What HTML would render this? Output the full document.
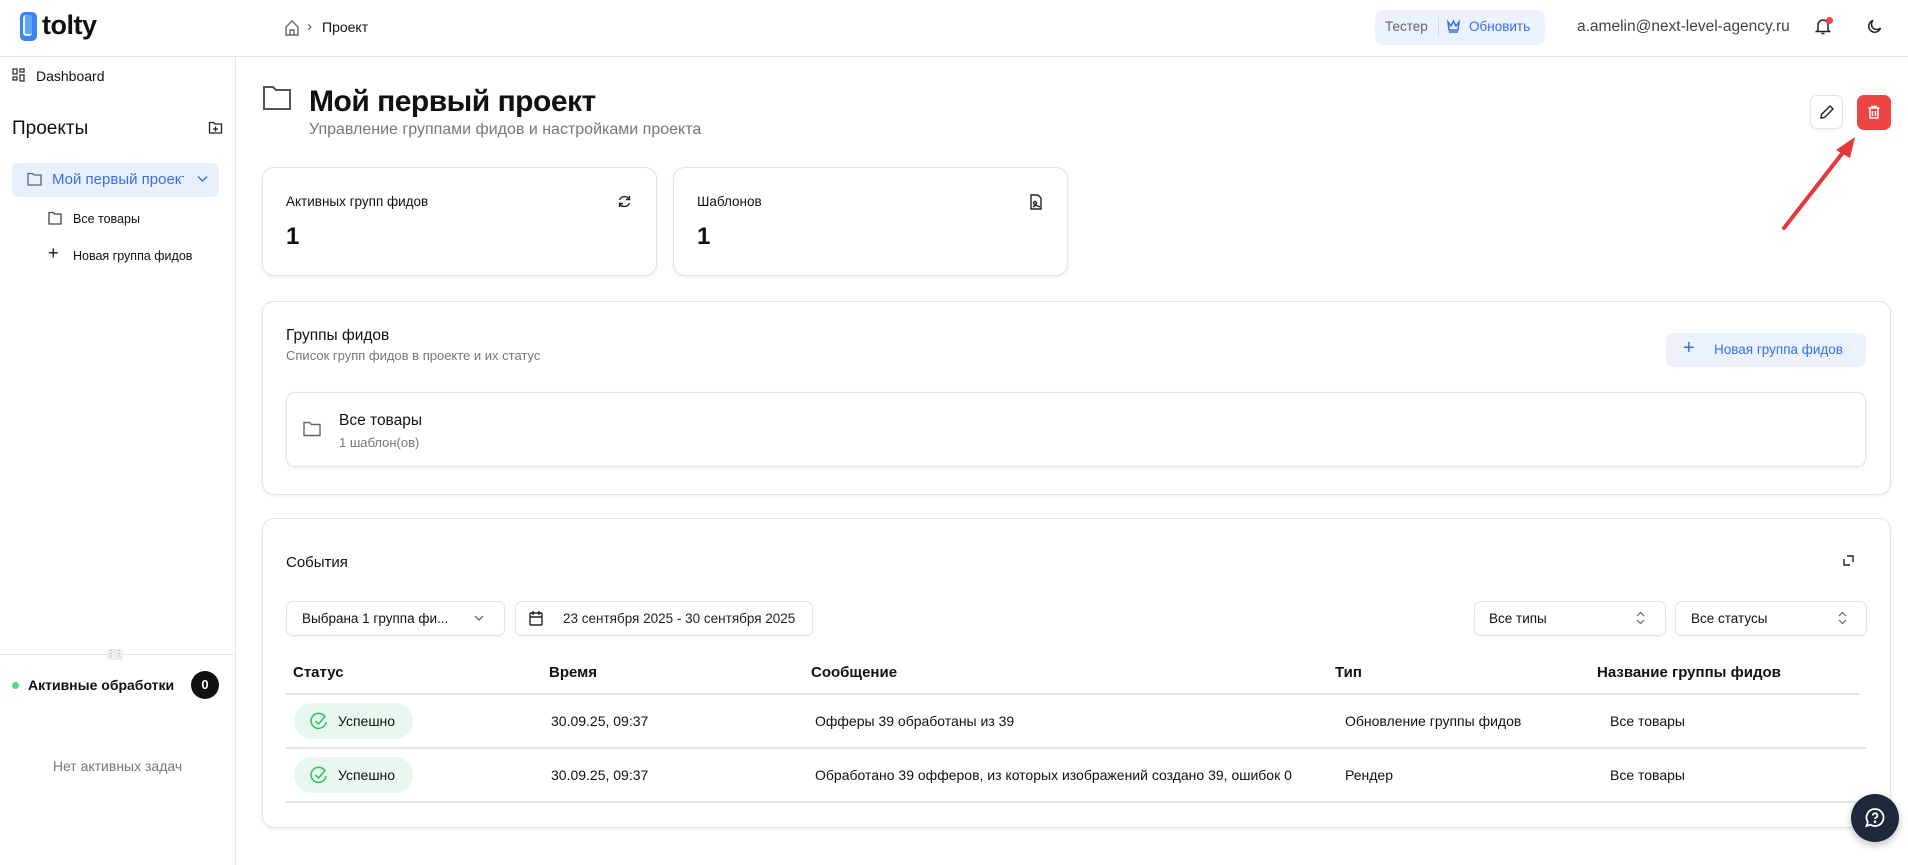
<!DOCTYPE html>
<html><head><meta charset="utf-8"><style>
*{box-sizing:border-box;margin:0;padding:0}
body{width:1908px;height:865px;overflow:hidden;background:#fff;font-family:"Liberation Sans","Noto Sans CJK SC",sans-serif;color:#111;font-size:14px;position:relative}
.a{position:absolute}
.card{position:absolute;border:1px solid #e4e4e7;border-radius:12px;background:#fff;box-shadow:0 1px 3px rgba(0,0,0,.08)}
.btn{position:absolute;border:1px solid #e4e4e7;border-radius:7px;background:#fff;box-shadow:0 1px 2px rgba(0,0,0,.05)}
svg{display:block}
.hl{position:absolute;height:2px;background:#e5e5e5}
</style></head><body>
<!-- header -->
<div class="a" style="left:0;top:56px;width:1908px;height:1px;background:#e5e5e5"></div>
<div class="a" style="left:20px;top:12px;width:17px;height:29px;border-radius:5px;background:#3b82f6"></div>
<div class="a" style="left:23px;top:15px;width:9px;height:21px;border-radius:3px;background:#fff;opacity:.9"></div>
<div class="a" style="left:25px;top:15px;width:7px;height:19px;border-radius:2px;background:#60a5fa"></div>
<div class="a" style="left:42px;top:10px;font-size:27px;font-weight:bold;letter-spacing:-0.5px;color:#111">tolty</div>
<svg class="a" style="left:284px;top:19px" width="16" height="18" viewBox="0 0 16 18" fill="none" stroke="#666" stroke-width="1.4"><path d="M2 8 8 2l6 6v8H2z"/><path d="M6 16v-5h4v5"/></svg>
<div class="a" style="left:307px;top:18px;color:#555;font-size:15px">›</div>
<div class="a" style="left:322px;top:19px;font-size:14px">Проект</div>
<div class="a" style="left:1375px;top:10px;width:170px;height:35px;border-radius:8px;background:#ebf1fd"></div>
<div class="a" style="left:1385px;top:19px;color:#666;font-size:13.5px">Тестер</div>
<div class="a" style="left:1438px;top:17px;width:1px;height:20px;background:#d4d9e4"></div>
<svg class="a" style="left:1446px;top:19px" width="15" height="15" viewBox="0 0 15 15" fill="none" stroke="#3b6fe0" stroke-width="1.5"><path d="M2 3l3 4 2.5-5L10 7l3-4-1 8H3z"/><path d="M3 13h9"/></svg>
<div class="a" style="left:1469px;top:19px;color:#3b6fe0;font-size:13.5px">Обновить</div>
<div class="a" style="left:1577px;top:18px;color:#444;font-size:15.5px">a.amelin@next-level-agency.ru</div>
<svg class="a" style="left:1815px;top:17px" width="16" height="18" viewBox="0 0 16 18" fill="none" stroke="#222" stroke-width="1.5"><path d="M3 13V8a5 5 0 0 1 10 0v5l1.5 1.5h-13z"/><path d="M6.5 16.5h3"/></svg>
<div class="a" style="left:1826px;top:17px;width:7px;height:7px;border-radius:50%;background:#ef4444"></div>
<svg class="a" style="left:1867px;top:18px" width="16" height="16" viewBox="0 0 16 16" fill="none" stroke="#222" stroke-width="1.5"><path d="M13.5 10A6 6 0 1 1 6 2.5a5 5 0 0 0 7.5 7.5z"/></svg>
<!-- sidebar -->
<div class="a" style="left:235px;top:57px;width:1px;height:808px;background:#e5e5e5"></div>
<svg class="a" style="left:12px;top:68px" width="13" height="15" viewBox="0 0 13 15" fill="none" stroke="#333" stroke-width="1.3"><rect x="1" y="1" width="4" height="5"/><rect x="8" y="1" width="4" height="3"/><rect x="1" y="9" width="4" height="3"/><rect x="8" y="7" width="4" height="6"/></svg>
<div class="a" style="left:36px;top:68px;font-size:14px">Dashboard</div>
<div class="a" style="left:12px;top:118px;font-size:19px">Проекты</div>
<svg class="a" style="left:208px;top:120px" width="15" height="15" viewBox="0 0 15 15" fill="none" stroke="#222" stroke-width="1.3"><path d="M1.5 2.5h4l1.5 1.5h6.5v9h-12z"/><path d="M7.5 6.5v5M5 9h5"/></svg>
<div class="a" style="left:12px;top:163px;width:207px;height:34px;border-radius:7px;background:#e9f0fd"></div>
<svg class="a" style="left:27px;top:172px" width="15" height="14" viewBox="0 0 15 14" fill="none" stroke="#666" stroke-width="1.3"><path d="M1 1.5h4.5l1.5 1.5h7v10H1z"/></svg>
<div class="a" style="left:52px;top:171px;color:#3b6fe0;font-size:15px;width:132px;overflow:hidden;white-space:nowrap">Мой первый проект</div>
<svg class="a" style="left:197px;top:175px" width="11" height="8" viewBox="0 0 11 8" fill="none" stroke="#3b6fe0" stroke-width="1.4"><path d="M1 1.5 5.5 6 10 1.5"/></svg>
<svg class="a" style="left:48px;top:211px" width="14" height="14" viewBox="0 0 14 14" fill="none" stroke="#444" stroke-width="1.3"><path d="M1 1.5h4l1.5 1.5H13v10H1z"/></svg>
<div class="a" style="left:73px;top:212px;font-size:12.5px">Все товары</div>
<div class="a" style="left:48px;top:244px;font-size:18px;line-height:18px">+</div>
<div class="a" style="left:73px;top:249px;font-size:12.5px">Новая группа фидов</div>
<div class="a" style="left:0;top:654px;width:235px;height:1px;background:#e5e5e5"></div>
<div class="a" style="left:107px;top:649px;width:16px;height:11px;border-radius:3px;background:#eee;font-size:8px;color:#888;text-align:center;line-height:10px">⋮⋮</div>
<div class="a" style="left:12px;top:682px;width:7px;height:7px;border-radius:50%;background:#4ade80"></div>
<div class="a" style="left:28px;top:677px;font-size:14px;font-weight:bold">Активные обработки</div>
<div class="a" style="left:191px;top:671px;width:28px;height:28px;border-radius:50%;background:#111;color:#fff;font-weight:bold;text-align:center;line-height:28px;font-size:13px">0</div>
<div class="a" style="left:0;top:758px;width:235px;text-align:center;color:#777;font-size:14px">Нет активных задач</div>
<!-- title -->
<svg class="a" style="left:262px;top:85px" width="30" height="26" viewBox="0 0 30 26" fill="none" stroke="#555" stroke-width="2"><path d="M2 2h9l3 3h14v19H2z"/></svg>
<div class="a" style="left:309px;top:85px;font-size:30px;font-weight:bold;letter-spacing:-0.5px">Мой первый проект</div>
<div class="a" style="left:309px;top:121px;font-size:16px;color:#777">Управление группами фидов и настройками проекта</div>
<div class="btn" style="left:1810px;top:95px;width:33px;height:34px"></div>
<svg class="a" style="left:1819px;top:104px" width="16" height="16" viewBox="0 0 16 16" fill="none" stroke="#222" stroke-width="1.4"><path d="M11 2l3 3-8.5 8.5L2 14l.5-3.5z"/></svg>
<div class="a" style="left:1857px;top:95px;width:34px;height:35px;border-radius:7px;background:#ef4444"></div>
<svg class="a" style="left:1866px;top:104px" width="16" height="16" viewBox="0 0 16 16" fill="none" stroke="#fff" stroke-width="1.5"><path d="M2.5 4h11M6 4V2.5h4V4M4 4v10h8V4M6.5 7v5M9.5 7v5"/></svg>
<svg class="a" style="left:1780px;top:130px" width="82" height="102" viewBox="0 0 82 102"><path d="M4 98 L68 16" stroke="#e5383b" stroke-width="4" stroke-linecap="round"/><path d="M75 7 L56 20 L70 28z" fill="#e5383b"/></svg>
<!-- stat cards -->
<div class="card" style="left:262px;top:167px;width:395px;height:109px"></div>
<div class="a" style="left:286px;top:194px;font-size:13.5px">Активных групп фидов</div>
<svg class="a" style="left:617px;top:194px" width="15" height="15" viewBox="0 0 15 15" fill="none" stroke="#222" stroke-width="1.4"><path d="M12.5 5.5A5.5 5.5 0 0 0 2.5 6M2.5 9.5a5.5 5.5 0 0 0 10-.5"/><path d="M12.5 2v3.5H9M2.5 13V9.5H6"/></svg>
<div class="a" style="left:286px;top:223px;font-size:24px;font-weight:bold">1</div>
<div class="card" style="left:673px;top:167px;width:395px;height:109px"></div>
<div class="a" style="left:697px;top:194px;font-size:13.5px">Шаблонов</div>
<svg class="a" style="left:1029px;top:194px" width="14" height="16" viewBox="0 0 14 16" fill="none" stroke="#222" stroke-width="1.4"><path d="M2 1h7l3 3v11H2z"/><circle cx="6" cy="9" r="1.5"/><path d="M4 13l3-2 4 2"/></svg>
<div class="a" style="left:697px;top:223px;font-size:24px;font-weight:bold">1</div>
<!-- groups card -->
<div class="card" style="left:262px;top:301px;width:1629px;height:194px"></div>
<div class="a" style="left:286px;top:327px;font-size:15.5px">Группы фидов</div>
<div class="a" style="left:286px;top:348px;font-size:13px;color:#777">Список групп фидов в проекте и их статус</div>
<div class="a" style="left:1666px;top:333px;width:200px;height:34px;border-radius:7px;background:#ebf1fd"></div>
<div class="a" style="left:1683px;top:337px;color:#3b6fe0;font-size:20px">+</div>
<div class="a" style="left:1714px;top:342px;color:#3b6fe0;font-size:13.5px">Новая группа фидов</div>
<div class="card" style="left:286px;top:392px;width:1580px;height:75px;border-radius:9px"></div>
<svg class="a" style="left:303px;top:421px" width="18" height="16" viewBox="0 0 18 16" fill="none" stroke="#666" stroke-width="1.4"><path d="M1 1.5h5.5l2 2H17v11H1z"/></svg>
<div class="a" style="left:339px;top:412px;font-size:15.5px">Все товары</div>
<div class="a" style="left:339px;top:435px;font-size:13px;color:#777">1 шаблон(ов)</div>
<!-- events -->
<div class="card" style="left:262px;top:518px;width:1629px;height:310px"></div>
<div class="a" style="left:286px;top:554px;font-size:15px">События</div>
<svg class="a" style="left:1843px;top:555px" width="11" height="11" viewBox="0 0 11 11" fill="none" stroke="#222" stroke-width="1.4"><path d="M4 1h6v6M1 4v6h6"/></svg>
<div class="btn" style="left:286px;top:601px;width:219px;height:35px"></div>
<div class="a" style="left:302px;top:611px;font-size:13.5px">Выбрана 1 группа фи...</div>
<svg class="a" style="left:474px;top:615px" width="10" height="7" viewBox="0 0 10 7" fill="none" stroke="#555" stroke-width="1.2"><path d="M1 1l4 4 4-4"/></svg>
<div class="btn" style="left:515px;top:601px;width:298px;height:35px"></div>
<svg class="a" style="left:529px;top:610px" width="14" height="16" viewBox="0 0 14 16" fill="none" stroke="#222" stroke-width="1.4"><rect x="1" y="3" width="12" height="12" rx="1"/><path d="M1 7h12M4 1v4M10 1v4"/></svg>
<div class="a" style="left:563px;top:611px;font-size:13.5px;color:#222">23 сентября 2025 - 30 сентября 2025</div>
<div class="btn" style="left:1474px;top:601px;width:192px;height:35px"></div>
<div class="a" style="left:1489px;top:611px;font-size:13.5px">Все типы</div>
<svg class="a" style="left:1636px;top:611px" width="9" height="14" viewBox="0 0 9 14" fill="none" stroke="#666" stroke-width="1.2"><path d="M1 5l3.5-3.5L8 5M1 9l3.5 3.5L8 9"/></svg>
<div class="btn" style="left:1675px;top:601px;width:192px;height:35px"></div>
<div class="a" style="left:1691px;top:611px;font-size:13.5px">Все статусы</div>
<svg class="a" style="left:1838px;top:611px" width="9" height="14" viewBox="0 0 9 14" fill="none" stroke="#666" stroke-width="1.2"><path d="M1 5l3.5-3.5L8 5M1 9l3.5 3.5L8 9"/></svg>
<div class="a" style="left:293px;top:664px;font-size:15px;font-weight:bold">Статус</div>
<div class="a" style="left:549px;top:664px;font-size:15px;font-weight:bold">Время</div>
<div class="a" style="left:811px;top:664px;font-size:15px;font-weight:bold">Сообщение</div>
<div class="a" style="left:1335px;top:664px;font-size:15px;font-weight:bold">Тип</div>
<div class="a" style="left:1597px;top:664px;font-size:15px;font-weight:bold">Название группы фидов</div>
<div class="hl" style="left:286px;top:693px;width:1574px"></div>
<div class="hl" style="left:286px;top:747px;width:1580px"></div>
<div class="hl" style="left:286px;top:801px;width:1580px"></div>
<div class="a" style="left:294px;top:703px;width:119px;height:36px;border-radius:18px;background:#e8f8ee"></div>
<svg class="a" style="left:310px;top:711px" width="18" height="20" viewBox="0 0 18 20" fill="none" stroke="#22c55e" stroke-width="1.5"><path d="M15 6A7.5 7.5 0 1 0 16 11"/><path d="M5.5 10l3 3 7-8"/></svg>
<div class="a" style="left:338px;top:713px;font-size:14px">Успешно</div>
<div class="a" style="left:551px;top:713px;font-size:14px">30.09.25, 09:37</div>
<div class="a" style="left:815px;top:713px;font-size:14px">Офферы 39 обработаны из 39</div>
<div class="a" style="left:1345px;top:713px;font-size:14px">Обновление группы фидов</div>
<div class="a" style="left:1610px;top:713px;font-size:14px">Все товары</div>
<div class="a" style="left:294px;top:757px;width:119px;height:36px;border-radius:18px;background:#e8f8ee"></div>
<svg class="a" style="left:310px;top:765px" width="18" height="20" viewBox="0 0 18 20" fill="none" stroke="#22c55e" stroke-width="1.5"><path d="M15 6A7.5 7.5 0 1 0 16 11"/><path d="M5.5 10l3 3 7-8"/></svg>
<div class="a" style="left:338px;top:767px;font-size:14px">Успешно</div>
<div class="a" style="left:551px;top:767px;font-size:14px">30.09.25, 09:37</div>
<div class="a" style="left:815px;top:767px;font-size:14px">Обработано 39 офферов, из которых изображений создано 39, ошибок 0</div>
<div class="a" style="left:1345px;top:767px;font-size:14px">Рендер</div>
<div class="a" style="left:1610px;top:767px;font-size:14px">Все товары</div>
<div class="a" style="left:1851px;top:794px;width:48px;height:48px;border-radius:50%;background:#1e293b;box-shadow:0 3px 8px rgba(0,0,0,.25)"></div>
<svg class="a" style="left:1864px;top:807px" width="22" height="22" viewBox="0 0 22 22" fill="none" stroke="#fff" stroke-width="1.8"><path d="M11 2a8.5 8.5 0 1 1-4.5 15.7L2.5 19l1.3-4A8.5 8.5 0 0 1 11 2z"/><path d="M8.8 8.5a2.3 2.3 0 1 1 3 2.2c-.6.3-.8.7-.8 1.3"/><circle cx="11" cy="14.8" r=".5"/></svg>
</body></html>
